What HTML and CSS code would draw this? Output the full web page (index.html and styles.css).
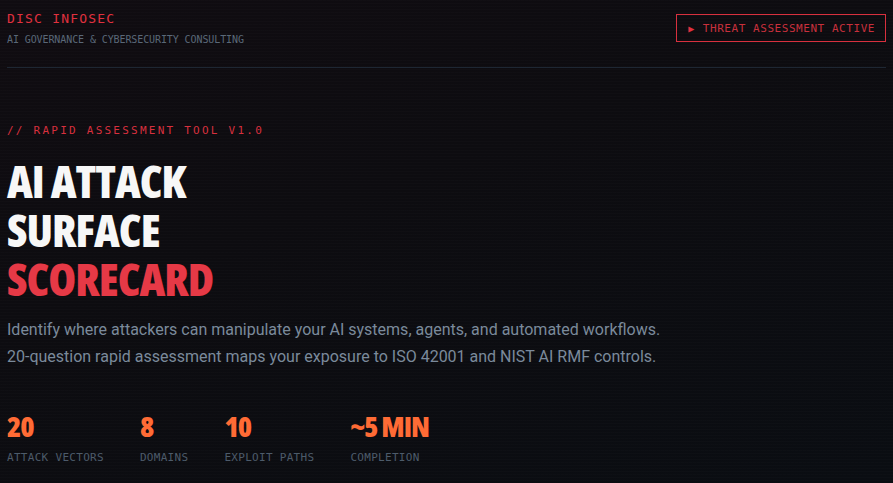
FILE: index.html
```html
<!DOCTYPE html>
<html lang="en">
<head>
<meta charset="utf-8">
<title>AI Attack Surface Scorecard</title>
<link rel="stylesheet" href="styles.css">
</head>
<body>
<div class="page">
  <header class="header">
    <div class="brand">
      <div class="brand-name">DISC INFOSEC</div>
      <div class="brand-sub">AI GOVERNANCE &amp; CYBERSECURITY CONSULTING</div>
    </div>
    <div class="badge"><span class="badge-arrow">&#9654;</span>THREAT ASSESSMENT ACTIVE</div>
  </header>
  <section class="hero">
    <div class="kicker">// RAPID ASSESSMENT TOOL V1.0</div>
    <h1 class="title">AI ATTACK<br>SURFACE<br><span class="accent">SCORECARD</span></h1>
    <p class="lead">Identify where attackers can manipulate your AI systems, agents, and automated workflows.<br>20-question rapid assessment maps your exposure to ISO 42001 and NIST AI RMF controls.</p>
    <div class="stats">
      <div class="stat"><div class="stat-num">20</div><div class="stat-label">ATTACK VECTORS</div></div>
      <div class="stat"><div class="stat-num">8</div><div class="stat-label">DOMAINS</div></div>
      <div class="stat"><div class="stat-num">10</div><div class="stat-label">EXPLOIT PATHS</div></div>
      <div class="stat"><div class="stat-num">~5 MIN</div><div class="stat-label">COMPLETION</div></div>
    </div>
  </section>
</div>
</body>
</html>
```
FILE: styles.css
```css
* { box-sizing: border-box; }
html, body { margin: 0; height: 100%; }
body {
  background:
    repeating-linear-gradient(to bottom, rgba(255,255,255,0.012) 0, rgba(255,255,255,0.012) 1px, transparent 1px, transparent 3px),
    linear-gradient(160deg, #100c11 0%, #0d0c10 40%, #0a0d12 100%);
  color: #e8e8e8;
  font-family: "DejaVu Sans Mono", monospace;
  overflow: hidden;
}
.page { padding: 0 7px; }
.header {
  display: flex;
  justify-content: space-between;
  align-items: flex-start;
  padding: 11px 0 0;
  height: 68px;
  border-bottom: 1px solid #1e2733;
}
.brand-name {
  color: #e0313f;
  font-size: 13px;
  line-height: 15px;
  letter-spacing: 1.2px;
}
.brand-sub {
  margin-top: 8px;
  color: #5a6878;
  font-size: 10px;
  line-height: 12px;
  letter-spacing: -0.1px;
}
.badge {
  margin-top: 3px;
  height: 28px;
  display: flex;
  align-items: center;
  padding: 0 10px 0 11px;
  border: 1px solid #d8303e;
  color: #c8303c;
  font-size: 11px;
  letter-spacing: 0.55px;
}
.badge-arrow { font-size: 10px; margin-right: 8px; color: #e0313f; }
.hero { padding-top: 56px; }
.kicker {
  color: #d8303e;
  font-size: 11px;
  line-height: 13px;
  letter-spacing: 2.24px;
}
.title {
  margin: 19px 0 0;
  font-family: "Open Sans", sans-serif;
  font-stretch: 75%;
  font-weight: 800;
  font-size: 45px;
  line-height: 49px;
  letter-spacing: -1px;
  color: #f7f7f7;
}
.accent { color: #e63946; }
.lead {
  margin: 13px 0 0;
  font-family: "Roboto", sans-serif;
  font-size: 16px;
  line-height: 27px;
  color: #7b8a9b;
}
.stats {
  display: flex;
  gap: 36px;
  margin-top: 40px;
}
.stat-num {
  font-family: "Open Sans", sans-serif;
  font-stretch: 75%;
  font-weight: 800;
  font-size: 29px;
  line-height: 32px;
  letter-spacing: -1px;
  color: #ff6b35;
}
.stat-label {
  margin-top: 9px;
  font-size: 11px;
  line-height: 13px;
  letter-spacing: 0.3px;
  color: #4d5b6a;
}
```
